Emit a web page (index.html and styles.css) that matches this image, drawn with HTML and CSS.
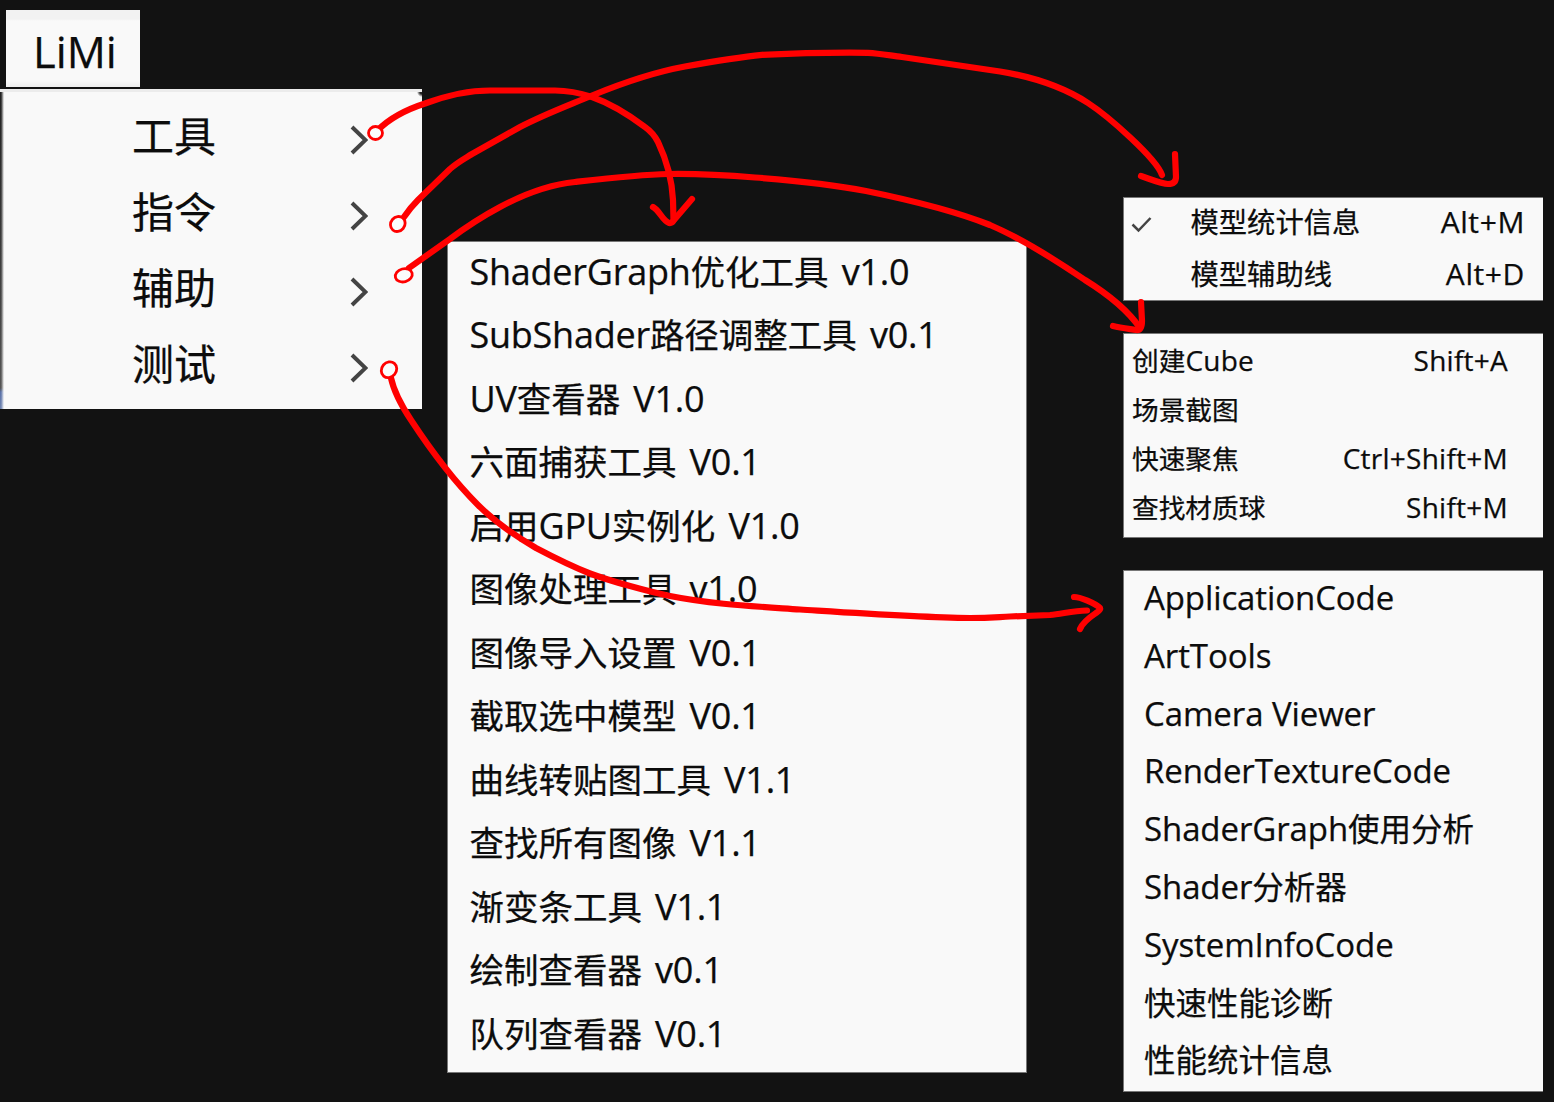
FILE: index.html
```html
<!DOCTYPE html>
<html lang="zh-CN">
<head>
<meta charset="utf-8">
<title>LiMi</title>
<link rel="stylesheet" href="styles.css">
</head>
<body>
<main class="board">
  <section class="column column-root">
    <div class="menu-button">LiMi</div>
    <ul class="menu menu-root">
      <li><span class="han">工具</span><svg class="chevron" viewBox="0 0 18 30"><path d="M2 2 15.500 15 2 28"/></svg></li>
      <li><span class="han">指令</span><svg class="chevron" viewBox="0 0 18 30"><path d="M2 2 15.500 15 2 28"/></svg></li>
      <li><span class="han">辅助</span><svg class="chevron" viewBox="0 0 18 30"><path d="M2 2 15.500 15 2 28"/></svg></li>
      <li><span class="han">测试</span><svg class="chevron" viewBox="0 0 18 30"><path d="M2 2 15.500 15 2 28"/></svg></li>
    </ul>
  </section>

  <ul class="menu menu-tools">
    <li>ShaderGraph<span class="han">优化工具</span> v1.0</li>
    <li>SubShader<span class="han">路径调整工具</span> v0.1</li>
    <li>UV<span class="han">查看器</span> V1.0</li>
    <li><span class="han">六面捕获工具</span> V0.1</li>
    <li><span class="han">启用</span>GPU<span class="han">实例化</span> V1.0</li>
    <li><span class="han">图像处理工具</span> v1.0</li>
    <li><span class="han">图像导入设置</span> V0.1</li>
    <li><span class="han">截取选中模型</span> V0.1</li>
    <li><span class="han">曲线转贴图工具</span> V1.1</li>
    <li><span class="han">查找所有图像</span> V1.1</li>
    <li><span class="han">渐变条工具</span> V1.1</li>
    <li><span class="han">绘制查看器</span> v0.1</li>
    <li><span class="han">队列查看器</span> V0.1</li>
  </ul>

  <section class="column column-sub">
    <ul class="menu menu-commands">
      <li><svg class="check" viewBox="0 0 22 18"><path d="M1.500 8.500 7.500 14.500 19.500 2"/></svg><span class="label"><span class="han">模型统计信息</span></span><span class="key">Alt+M</span></li>
      <li><span class="check"></span><span class="label"><span class="han">模型辅助线</span></span><span class="key">Alt+D</span></li>
    </ul>
    <ul class="menu menu-assist">
      <li><span class="label"><span class="han">创建</span>Cube</span><span class="key">Shift+A</span></li>
      <li><span class="label"><span class="han">场景截图</span></span></li>
      <li><span class="label"><span class="han">快速聚焦</span></span><span class="key">Ctrl+Shift+M</span></li>
      <li><span class="label"><span class="han">查找材质球</span></span><span class="key">Shift+M</span></li>
    </ul>
    <ul class="menu menu-tests">
      <li>ApplicationCode</li>
      <li>ArtTools</li>
      <li>Camera Viewer</li>
      <li>RenderTextureCode</li>
      <li>ShaderGraph<span class="han">使用分析</span></li>
      <li>Shader<span class="han">分析器</span></li>
      <li>SystemInfoCode</li>
      <li><span class="han">快速性能诊断</span></li>
      <li><span class="han">性能统计信息</span></li>
    </ul>
  </section>

  <svg class="arrows" viewBox="0 0 1554 1102">
    <g class="stroke">
      <path d="M378 130C390 118 408 109 425 103.500C448 95 468 90.500 490 90.500H555C570 90.500 580 93 592 97C612 104 633 118 645 127C652 132 655 136 658 142C667 161 672 180 673 200L673.500 220"/>
      <path d="M653 207C660 211 662 220 669 223Q672 223.500 674 220L692 199"/>
      <path d="M404 217Q410 208 418 200L450 169C458 162 464 159 472 154L520 127C545 114 567 106 592 95.500C620 84 655 72 685 66.500C710 62 740 57 762 54.800C800 53 840 52.500 868 52.800C880 53.500 890 55.500 902 57L1000 71.500C1040 78 1068 90 1088 103C1108 116 1156 158 1162 175"/>
      <path d="M1141 176C1150 179 1162 184 1168 184Q1176 184 1176 177L1175 154"/>
      <path d="M409 268L450 239C470 224 485 215 500 207C528 192 550 184.500 575 182C610 178 640 174.500 668 174C700 173.500 725 175 755 177.500C800 181 835 185 866 191C910 200 955 211 990 225C1025 240 1060 263 1085 280C1106 293 1127 309 1140 328"/>
      <path d="M1113 326C1121 328 1130 329 1136 330Q1142 331 1142 321L1141 302"/>
      <path d="M391 378C394 392 403 408 411 420C430 449 450 477 478 505C495 522 512 534 536 548C555 558 576 568 590 573.500C610 581 650 592 670 596C710 604 750 606 800 609.500C855 613 920 617.500 970 618C990 618 998 617 1010 616.500L1050 615C1062 614 1072 611 1087 610.500"/>
      <path d="M1074 597C1080 597 1095 603 1100 608Q1101 610 1096 613C1087 619 1082 624 1080 629"/>
    </g>
    <g class="anchor">
      <ellipse cx="375.500" cy="133" rx="7" ry="6.500"/>
      <ellipse cx="397.800" cy="224" rx="7.800" ry="7" transform="rotate(-50 397.800 224)"/>
      <ellipse cx="403.800" cy="275.300" rx="8.600" ry="6.500" transform="rotate(-15 403.800 275.300)"/>
      <ellipse cx="389" cy="369.700" rx="8.300" ry="7.300" transform="rotate(-50 389 369.700)"/>
    </g>
  </svg>
</main>
</body>
</html>
```
FILE: styles.css
```css
* { box-sizing: border-box; }

body {
  margin: 0;
  background: #121212;
  color: #0c0c0c;
  font-family: "Open Sans", "Noto Sans CJK SC", sans-serif;
  -webkit-text-stroke: 0.250px #0c0c0c;
}

.board {
  position: relative;
  display: flex;
  align-items: flex-start;
  width: 1554px;
  height: 1102px;
  overflow: hidden;
}

.column {
  display: flex;
  flex-direction: column;
}

.menu {
  display: flex;
  flex-direction: column;
  margin: 0;
  padding: 0;
  list-style: none;
  background: #f9f9f9;
  border: 1px solid #777;
  white-space: nowrap;
}

.han {
  font-family: "Noto Sans CJK SC", sans-serif;
  line-height: 0;
  letter-spacing: 0;
}

/* Root menu */
.column-root {
  width: 422px;
  padding-top: 10px;
  gap: 2px;
}

.menu-button {
  width: 134px;
  height: 77px;
  margin-left: 6px;
  padding-left: 27px;
  background: linear-gradient(#f2f2f2 9px, #f9f9f9 11px, #f9f9f9 71px, #efefef 76px);
  font-size: 43.500px;
  line-height: 83px;
}

.menu-root {
  height: 320px;
  padding: 19px 54px 0 132px;
  gap: 26px;
  border: 0;
  border-top: 3px solid #ececec;
  background:
    radial-gradient(circle at 100% 0, #222 2px, transparent 5px),
    linear-gradient(90deg, transparent 1px, #f9f9f9 4px) 0 0 / 4px 100% no-repeat,
    linear-gradient(#222 0, #444 208px, #555 296px, #5b72a8 300px, #7084b0) 0 0 / 4px 100% no-repeat,
    #f9f9f9;
  font-size: 42px;
  line-height: 50px;
}

.menu-root li {
  display: flex;
  justify-content: space-between;
  height: 50px;
}

.menu-root .han { line-height: 46px; }

.chevron {
  width: 18px;
  height: 30px;
  margin-top: 14px;
  fill: none;
  stroke: #444;
  stroke-width: 4;
}

/* Tools submenu */
.menu-tools {
  width: 580px;
  height: 832px;
  margin: 241px 0 0 25px;
  padding: 5.500px 0 0 21.500px;
  gap: 15.500px;
  font-size: 36px;
  line-height: 48px;
  letter-spacing: -0.250px;
  word-spacing: 4px;
}

.menu-tools .han { font-size: 34.500px; }

/* Right-hand submenus */
.column-sub {
  width: 420px;
  margin-left: 96px;
  padding-top: 197px;
}

.column-sub .menu { border-right: 0; }

.menu-commands li,
.menu-assist li { display: flex; }

.key { margin-left: auto; }

.menu-commands {
  height: 104px;
  padding: 6px 18px 0 8px;
  gap: 15.500px;
  font-size: 30px;
  line-height: 36px;
  letter-spacing: 0.600px;
}

.menu-commands .han { font-size: 28.300px; }

.check {
  width: 22px;
  height: 18px;
  margin: 12px 37.500px 0 -1px;
  fill: none;
  stroke: #444;
  stroke-width: 2.500;
}

.menu-assist {
  height: 205px;
  margin-top: 32px;
  padding: 9px 35px 0 8px;
  gap: 14.900px;
  font-size: 28px;
  line-height: 34px;
  letter-spacing: 0.250px;
}

.menu-assist .han { font-size: 26.700px; }

.menu-tests {
  height: 522px;
  margin-top: 32px;
  padding: 7px 0 0 20px;
  gap: 17.800px;
  font-size: 33px;
  line-height: 40px;
  letter-spacing: -0.100px;
}

.menu-tests .han { font-size: 31.500px; }

/* Hand-drawn arrows lying over the menus */
.arrows {
  position: absolute;
  inset: 0;
  width: 1554px;
  height: 1102px;
  pointer-events: none;
  fill: none;
  stroke: #f00;
  stroke-linecap: round;
  stroke-linejoin: round;
}

.stroke { stroke-width: 6.200; }

.anchor {
  fill: #fbfbfb;
  stroke-width: 2.800;
}
```
